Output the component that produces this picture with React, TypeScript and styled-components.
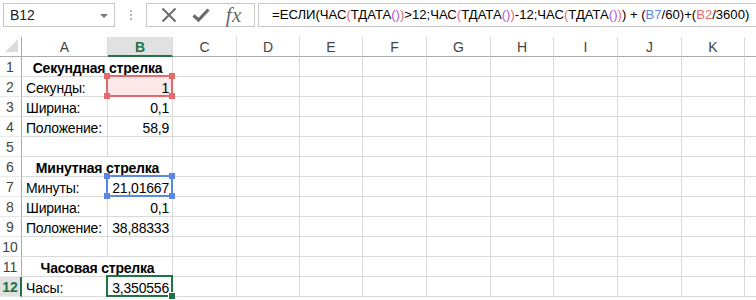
import React from "react";
import styled, { createGlobalStyle } from "styled-components";

const GREEN = "#217346";
const RED = "#e8696b";
const BLUE = "#5b86e5";
const PURPLE = "#b05ad0";
const GRID = "#d9d9d9";

const GlobalStyle = createGlobalStyle`
  html, body { margin: 0; padding: 0; background: #fff; }
  body { font-family: "Liberation Sans", Arial, sans-serif; color: #000; }
  * { box-sizing: border-box; }
`;

const Window = styled.div`
  width: 756px;
  height: 300px;
  overflow: hidden;
  background: #fff;
`;

// строка формул
const Toolbar = styled.div`
  display: flex;
  height: 27px;
  padding: 3px 0 0 3px;
  margin-bottom: 10px;
`;

const NameBox = styled.div`
  position: relative;
  width: 112px;
  height: 24px;
  border: 1px solid #c6c6c6;
  font-size: 14px;
  line-height: 22px;
  padding-left: 6px;
  color: #222;
`;

const DropArrow = styled.span`
  position: absolute;
  right: 6px;
  top: 10px;
  width: 0;
  height: 0;
  border-left: 4px solid transparent;
  border-right: 4px solid transparent;
  border-top: 4px solid #7a7a7a;
`;

const Dots = styled.div`
  width: 31px;
  display: flex;
  flex-direction: column;
  align-items: center;
  gap: 2px;
  padding-top: 7px;

  span {
    width: 2px;
    height: 2px;
    background: #b4b4b4;
  }
`;

const ButtonBox = styled.div`
  width: 109px;
  height: 24px;
  border: 1px solid #c6c6c6;
  display: flex;
  align-items: center;
  justify-content: space-around;
  padding: 0 4px 0 6px;
`;

const IconButton = styled.div`
  width: 24px;
  height: 22px;
  display: flex;
  align-items: center;
  justify-content: center;
  color: #6b6b6b;
`;

const Fx = styled.span`
  font-family: "Liberation Serif", "Times New Roman", serif;
  font-style: italic;
  font-size: 21px;
  line-height: 22px;
  color: #6b6b6b;
  letter-spacing: 0.5px;
`;

const FormulaBox = styled.div`
  flex: 1;
  margin-left: 3px;
  height: 24px;
  border: 1px solid #c6c6c6;
  border-right: none;
  font-size: 13.1px;
  line-height: 22px;
  padding-left: 13px;
  white-space: nowrap;
  overflow: hidden;
`;

const Tok = styled.span<{ $c: string }>`
  color: ${(p) => p.$c};
`;

// лист
const Sheet = styled.div`
  display: grid;
  grid-template-columns: 22px 86px 65px 64px 63px 63px 64px 64px 63px 64px 64px 63px 40px;
  grid-auto-rows: 20px;
  font-size: 14px;
`;

const Corner = styled.div`
  position: relative;
  border-right: 1px solid #ababab;
  border-bottom: 1px solid #ababab;

  &::after {
    content: "";
    position: absolute;
    right: 3px;
    bottom: 4px;
    width: 0;
    height: 0;
    border-left: 13px solid transparent;
    border-bottom: 13px solid #dcdcdc;
  }
`;

const ColHead = styled.div<{ $active?: boolean }>`
  display: flex;
  align-items: center;
  justify-content: center;
  color: ${(p) => (p.$active ? GREEN : "#444")};
  font-weight: ${(p) => (p.$active ? "bold" : "normal")};
  background: ${(p) => (p.$active ? "#e1e1e1" : "#fff")};
  border-right: 1px solid ${GRID};
  border-bottom: ${(p) => (p.$active ? `2px solid ${GREEN}` : "1px solid #ababab")};
  padding-top: ${(p) => (p.$active ? "1px" : "0")};
`;

const RowHead = styled.div<{ $active?: boolean }>`
  display: flex;
  align-items: center;
  justify-content: center;
  color: ${(p) => (p.$active ? GREEN : "#444")};
  font-weight: ${(p) => (p.$active ? "bold" : "normal")};
  background: ${(p) => (p.$active ? "#e1e1e1" : "#fff")};
  border-right: ${(p) => (p.$active ? `2px solid ${GREEN}` : "1px solid #ababab")};
  border-bottom: 1px solid #e8e8e8;
  padding-right: ${(p) => (p.$active ? "0" : "1px")};
`;

const Cell = styled.div<{ $align?: "left" | "right" | "center"; $bold?: boolean; $span?: number; $fill?: string }>`
  position: relative;
  grid-column: span ${(p) => p.$span || 1};
  border-right: 1px solid ${GRID};
  border-bottom: 1px solid ${GRID};
  background: ${(p) => p.$fill || "#fff"};
  text-align: ${(p) => p.$align || "left"};
  font-weight: ${(p) => (p.$bold ? "bold" : "normal")};
  letter-spacing: -0.2px;
  line-height: 20px;
  padding: 1px 3px 0 4px;
  white-space: nowrap;
`;

const RefBox = styled.div<{ $c: string }>`
  position: absolute;
  top: -2px;
  left: -2px;
  right: -1px;
  bottom: -1px;
  border: 2px solid ${(p) => p.$c};
  z-index: 2;
  pointer-events: none;
`;

const Handle = styled.span<{ $c: string; $x: "l" | "r"; $y: "t" | "b" }>`
  position: absolute;
  width: 6px;
  height: 6px;
  background: ${(p) => p.$c};
  ${(p) => (p.$x === "l" ? "left: -4px;" : "right: -4px;")}
  ${(p) => (p.$y === "t" ? "top: -4px;" : "bottom: -4px;")}
`;

const ActiveBox = styled.div`
  position: absolute;
  top: -2px;
  left: -2px;
  right: -1px;
  bottom: -1px;
  border: 2px solid ${GREEN};
  z-index: 2;

  &::after {
    content: "";
    position: absolute;
    right: -4px;
    bottom: -4px;
    width: 6px;
    height: 6px;
    background: ${GREEN};
    border-left: 1px solid #fff;
    border-top: 1px solid #fff;
  }
`;

// последняя колонка видна лишь краем, без буквы
const cols = ["A", "B", "C", "D", "E", "F", "G", "H", "I", "J", "K", ""];

type Row = { a?: string; b?: string; title?: string };

const rows: Row[] = [
  { title: "Секундная стрелка" },
  { a: "Секунды:", b: "1" },
  { a: "Ширина:", b: "0,1" },
  { a: "Положение:", b: "58,9" },
  {},
  { title: "Минутная стрелка" },
  { a: "Минуты:", b: "21,01667" },
  { a: "Ширина:", b: "0,1" },
  { a: "Положение:", b: "38,88333" },
  {},
  { title: "Часовая стрелка" },
  { a: "Часы:", b: "3,350556" },
];

const RefCorners: React.FC<{ c: string }> = ({ c }) => (
  <RefBox $c={c}>
    <Handle $c={c} $x="l" $y="t" />
    <Handle $c={c} $x="r" $y="t" />
    <Handle $c={c} $x="l" $y="b" />
    <Handle $c={c} $x="r" $y="b" />
  </RefBox>
);

const Formula = () => (
  <FormulaBox>
    =ЕСЛИ(ЧАС<Tok $c={RED}>(</Tok>ТДАТА<Tok $c={PURPLE}>()</Tok>
    <Tok $c={RED}>)</Tok>&gt;12;ЧАС<Tok $c={RED}>(</Tok>ТДАТА<Tok $c={PURPLE}>()</Tok>
    <Tok $c={RED}>)</Tok>-12;ЧАС<Tok $c={RED}>(</Tok>ТДАТА<Tok $c={PURPLE}>()</Tok>
    <Tok $c={RED}>)</Tok>) + (<Tok $c={BLUE}>B7</Tok>/60)+(<Tok $c={RED}>B2</Tok>/3600)
  </FormulaBox>
);

const App: React.FC = () => {
  return (
    <Window>
      <GlobalStyle />
      <Toolbar>
        <NameBox>
          B12
          <DropArrow />
        </NameBox>
        <Dots>
          <span />
          <span />
          <span />
        </Dots>
        <ButtonBox>
          <IconButton>
            <svg width="16" height="16" viewBox="0 0 16 16">
              <path d="M1.5 1.5 L14.5 14.5 M14.5 1.5 L1.5 14.5" stroke="currentColor" strokeWidth="2" fill="none" />
            </svg>
          </IconButton>
          <IconButton>
            <svg width="18" height="16" viewBox="0 0 18 16">
              <path d="M1.5 8.5 L6.5 13 L16.5 2.5" stroke="currentColor" strokeWidth="3.2" fill="none" strokeLinejoin="miter" />
            </svg>
          </IconButton>
          <IconButton>
            <Fx>fx</Fx>
          </IconButton>
        </ButtonBox>
        <Formula />
      </Toolbar>

      <Sheet>
        <Corner />
        {cols.map((c, i) => (
          <ColHead key={i} $active={c === "B"}>
            {c}
          </ColHead>
        ))}
        {rows.map((r, i) => {
          const n = i + 1;
          return (
            <React.Fragment key={n}>
              <RowHead $active={n === 12}>{n}</RowHead>
              {r.title ? (
                <Cell $span={2} $align="center" $bold>
                  {r.title}
                </Cell>
              ) : (
                <>
                  <Cell>{r.a}</Cell>
                  <Cell $align="right" $fill={n === 2 ? "#fce8e8" : undefined}>
                    {r.b}
                    {n === 2 && <RefCorners c={RED} />}
                    {n === 7 && <RefCorners c={BLUE} />}
                    {n === 12 && <ActiveBox />}
                  </Cell>
                </>
              )}
              {cols.slice(2).map((_, k) => (
                <Cell key={k} />
              ))}
            </React.Fragment>
          );
        })}
      </Sheet>
    </Window>
  );
};

export default App;
